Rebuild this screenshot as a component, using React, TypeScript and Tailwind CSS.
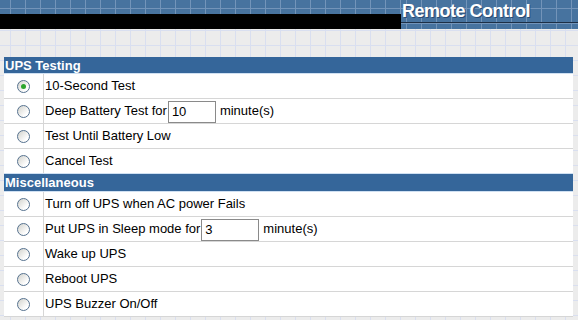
import React from 'react'

interface Option {
  label: string
  checked?: boolean
  input?: { value: string; width: string; suffix: string }
}

const testing: Option[] = [
  { label: '10-Second Test', checked: true },
  { label: 'Deep Battery Test for', input: { value: '10', width: 'w-[48px]', suffix: 'minute(s)' } },
  { label: 'Test Until Battery Low' },
  { label: 'Cancel Test' },
]

const misc: Option[] = [
  { label: 'Turn off UPS when AC power Fails' },
  { label: 'Put UPS in Sleep mode for', input: { value: '3', width: 'w-[58px]', suffix: 'minute(s)' } },
  { label: 'Wake up UPS' },
  { label: 'Reboot UPS' },
  { label: 'UPS Buzzer On/Off' },
]

function Radio({ checked }: { checked?: boolean }) {
  return (
    <span className="flex h-[13px] w-[13px] items-center justify-center rounded-full border border-[#56728f] bg-[linear-gradient(135deg,#d2d2cc,#ffffff_75%)]">
      {checked && <span className="h-[5px] w-[5px] rounded-full bg-[#2da52d]" />}
    </span>
  )
}

function Row({ option, first }: { option: Option; first?: boolean }) {
  return (
    <div className={`flex h-[25px] border-t ${first ? 'border-[#cfe0f2]' : 'border-[#d6d6d6]'}`}>
      <div className="flex w-[40px] items-center justify-center border-r border-[#d6d6d6]">
        <Radio checked={option.checked} />
      </div>
      <div className="flex items-center pl-[1px] text-[13px] text-black">
        <span>{option.label}</span>
        {option.input && (
          <>
            <span
              className={`ml-[1px] mt-[1px] flex h-[22px] ${option.input.width} items-start border border-[#8a8a8a] bg-white pl-[3px] pt-[2px] leading-[15px]`}
            >
              {option.input.value}
            </span>
            <span className="ml-[4px]">{option.input.suffix}</span>
          </>
        )}
      </div>
    </div>
  )
}

function Section({ title, options, tall }: { title: string; options: Option[]; tall?: boolean }) {
  return (
    <div>
      <div
        className={`flex ${tall ? 'h-[17px]' : 'h-[16px]'} items-center bg-[#35669a] pl-[1px] text-[13px] font-bold leading-none text-white`}
      >
        {title}
      </div>
      {options.map((o, i) => (
        <Row key={o.label} option={o} first={i === 0} />
      ))}
    </div>
  )
}

export default function App() {
  return (
    <div
      className="h-[320px] w-[578px] overflow-hidden bg-[#ececec] bg-[linear-gradient(to_right,#d9dff0_1px,transparent_1px),linear-gradient(to_bottom,#d9dff0_1px,transparent_1px)] bg-[size:15px_15px] bg-[position:10px_0px]"
      style={{ fontFamily: '"Liberation Sans", Arial, sans-serif' }}
    >
      {/* top banner */}
      <div className="flex h-[29px]">
        <div className="flex flex-1 flex-col">
          <div className="h-[14px] bg-[#47739f] bg-[linear-gradient(to_right,#7394b9_1px,transparent_1px),linear-gradient(to_bottom,#7394b9_1px,transparent_1px)] bg-[size:15px_15px] bg-[position:10px_8px]" />
          <div className="h-[15px] bg-black" />
        </div>
        <div className="flex w-[177px] flex-col bg-[#47739f] bg-[linear-gradient(to_right,#7394b9_1px,transparent_1px),linear-gradient(to_bottom,#7394b9_1px,transparent_1px)] bg-[size:15px_15px] bg-[position:5px_8px]">
          <div className="h-[22px] pl-[1px] pt-[1px] text-[18px] font-bold leading-[20px] tracking-[-0.5px] text-white [text-shadow:1px_1px_0_#2a4a72]">
            Remote Control
          </div>
          <div className="h-[1px] bg-[#1d2f45]" />
        </div>
      </div>

      {/* panel */}
      <div className="pl-[4px] pt-[28px]">
        <div className="w-[569px] bg-white">
          <Section title="UPS Testing" options={testing} />
          <div className="h-[1px] bg-[#cfe0f2]" />
          <Section title="Miscellaneous" options={misc} tall />
          <div className="h-[1px] bg-[#d6d6d6]" />
        </div>
      </div>
    </div>
  )
}
